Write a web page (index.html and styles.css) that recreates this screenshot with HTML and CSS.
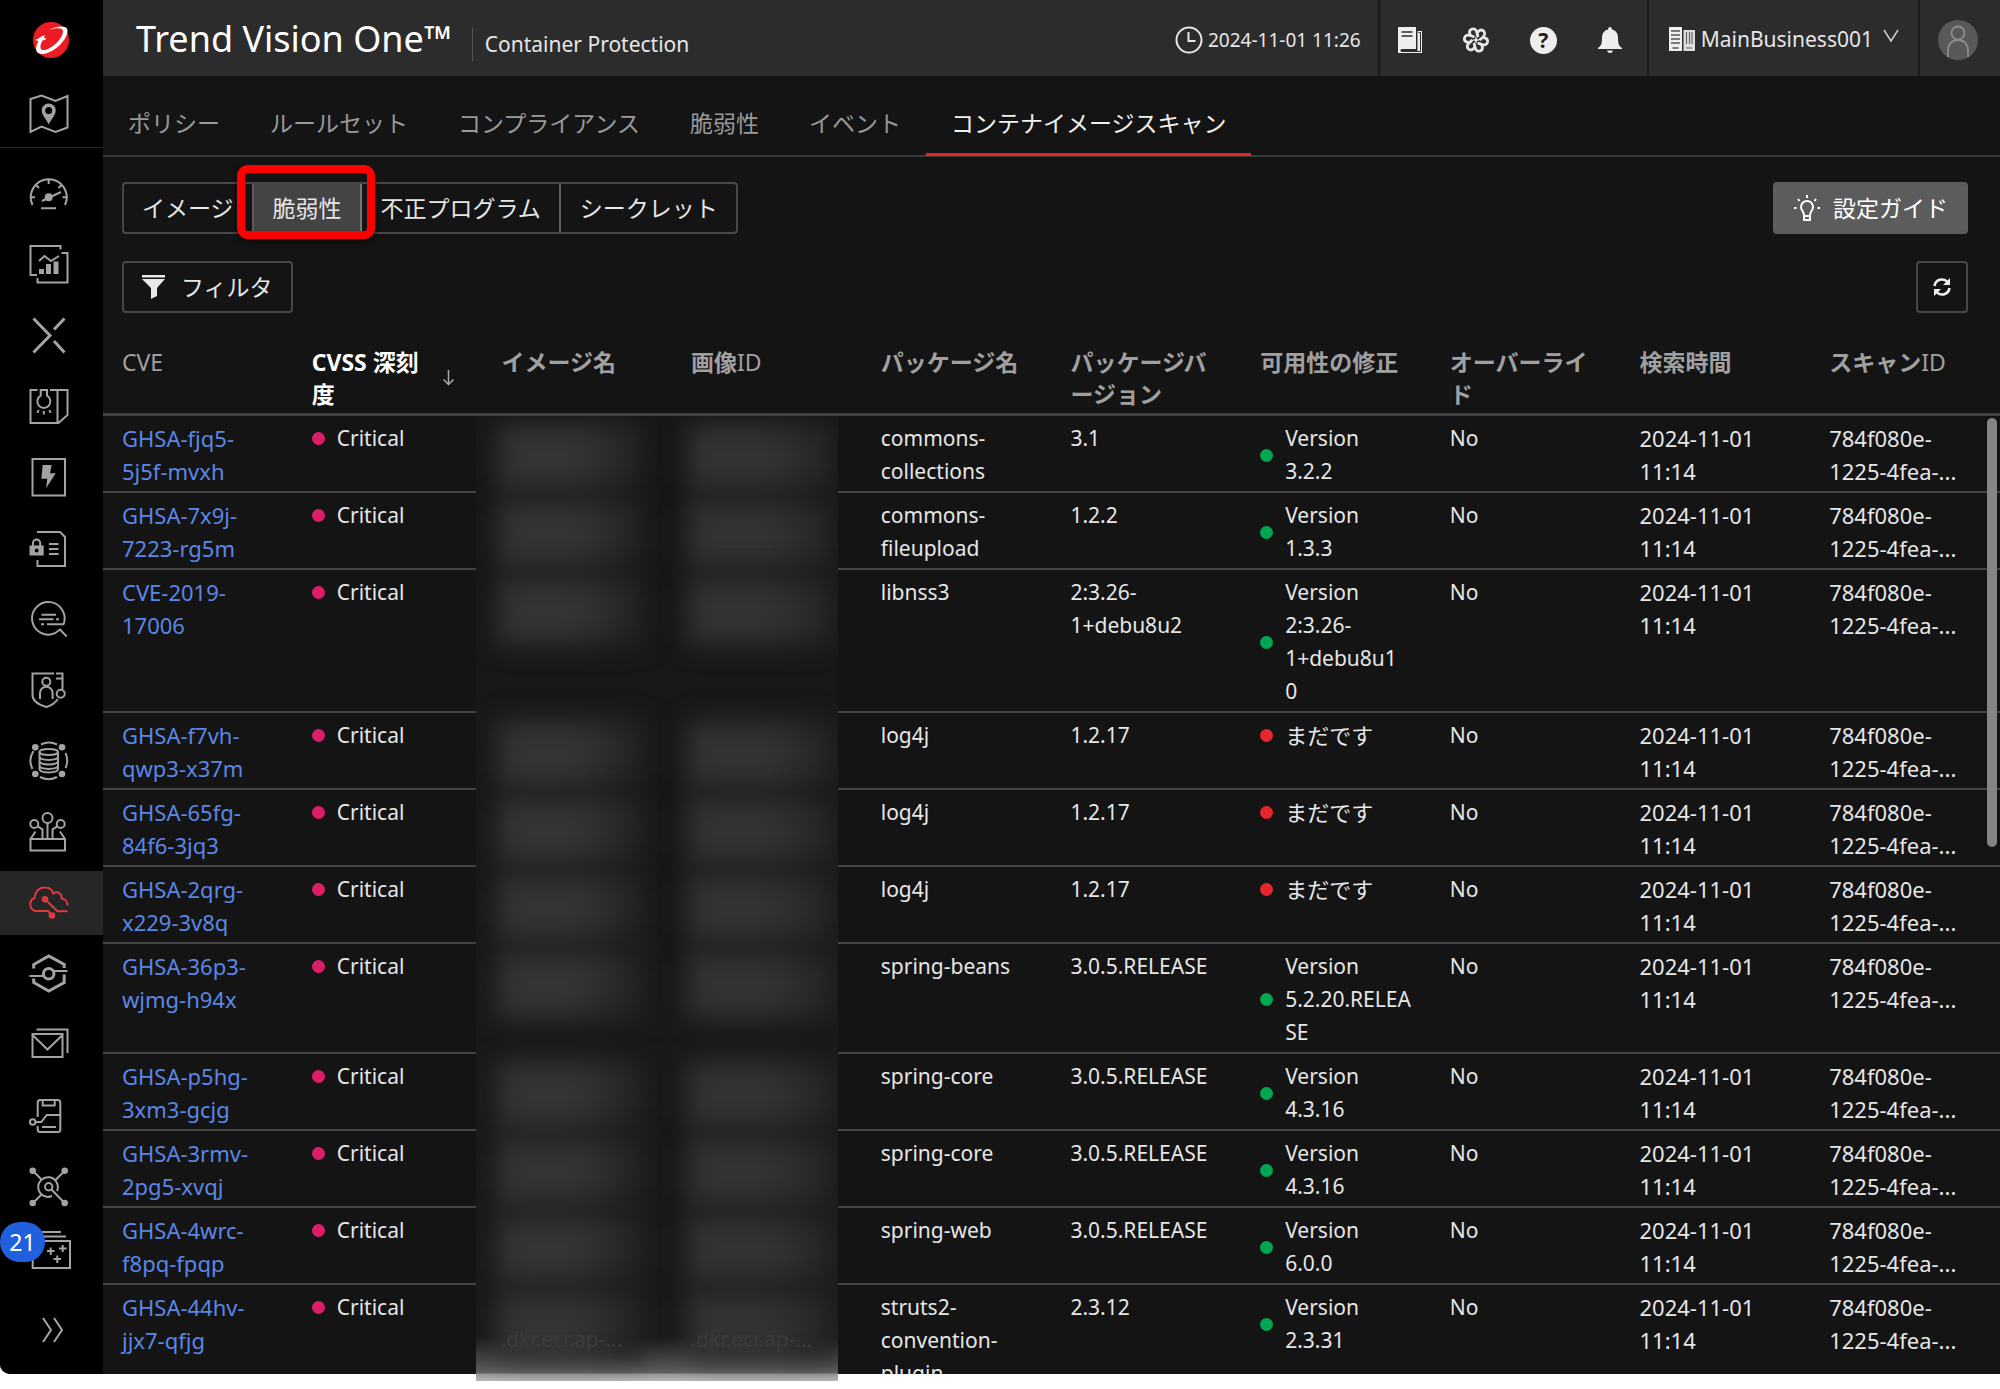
FILE: index.html
```html
<!DOCTYPE html>
<html lang="ja">
<head>
<meta charset="utf-8">
<title>Trend Vision One - Container Protection</title>
<link rel="stylesheet" href="styles.css">
</head>
<body>
<div class="app">
  <aside class="sidebar">
    <a class="logo" href="#" aria-label="Home"><svg width="36" height="36" viewBox="0 0 36 36"><circle cx="18" cy="18" r="18" fill="#ed1c24"/><path d="M2 18c2-1 5-2 7-4l3-.5-1.500 3 3-.5-1 1.500-3 1C6 25 7 29 12 28c8-2 17-11 18-18 .5-4-5-5-14-2C24 3.500 34 3 34.500 8c.5 9-12 22-24 24C3 33 1 27 5.500 19z" fill="#fff"/></svg></a>
    <a class="nav-item nav-map" href="#" aria-label="Map"><svg class="ico" viewBox="0 0 38 38"><path d="M.5 4l11-3.500 14 5.500 12-5v31.500l-12 4.500-14-5.500-11 5.500z"/><path class="f" fill-rule="evenodd" d="M18.700 8.500a7 7 0 0 0-7 7c0 5 5 9 7 14 2-5 7-9 7-14a7 7 0 0 0-7-7zm0 3.500a3.500 3.500 0 1 1 0 7 3.500 3.500 0 0 1 0-7z"/></svg></a>
    <nav class="nav" aria-label="Main">
      <a class="nav-item" href="#" aria-label="Dashboard"><svg class="ico" viewBox="0 0 38 38"><path d="M2.500 31A18 18 0 1 1 35 31M18.700 5v5M1 23.300h4M32.500 23.300h4M6 11l3 3M31.500 11l-3 3M12 27l19-9M11 34.300h15"/><circle class="f" cx="18.700" cy="23.300" r="4"/></svg></a>
      <a class="nav-item" href="#" aria-label="Reports"><svg class="ico" viewBox="0 0 38 38"><path d="M30.500 4.500V1H.5v29H7M31.500 8h6v29.500h-30V33M9 16l5.500-5 6.500 5 8-5"/><path class="f" d="M9 24h5v5H9zM16 19h5v10h-5zM23.500 16.500h5V29h-5z"/></svg></a>
      <a class="nav-item" href="#" aria-label="XDR"><svg class="ico" viewBox="0 0 38 38"><path stroke-width="3" d="M3.500 2.500l16.500 17-16.500 17M34.500 2.500L24 13.500M24 25l10.500 11.500"/></svg></a>
      <a class="nav-item" href="#" aria-label="Threat intelligence"><svg class="ico" viewBox="0 0 38 38"><path d="M7.500 3H.5v33h28l9-8V3H20M27.500 3v33M10.700 3v5.700a6.500 6.500 0 1 0 6.300 0V3zM13.800 24v3.500M8.500 23l-1 3M19.500 23l1 3"/></svg></a>
      <a class="nav-item" href="#" aria-label="Response"><svg class="ico" viewBox="0 0 38 38"><path d="M2.500 1h32.500v36.500H2.500z"/><path class="f" d="M12.700 7h9l-1.700 8.300h5.700L16 30.300l1.300-9.600h-6z"/></svg></a>
      <a class="nav-item" href="#" aria-label="Zero trust"><svg class="ico" viewBox="0 0 38 38"><path d="M7 3h23l5 5v29H7.500v-6M19 15h9.500M19 20h9.500M19 25h9.500M3 17v-3a3.600 3.600 0 0 1 7.200 0v3"/><path class="f" fill-rule="evenodd" d="M-.5 16.500h14.200v10H-.5zM6.600 19.500a2 2 0 1 0 0 4 2 2 0 0 0 0-4z"/></svg></a>
      <a class="nav-item" href="#" aria-label="Search"><svg class="ico" viewBox="0 0 38 38"><path d="M33.500 24.300A16.300 16.300 0 1 0 25 33.200l5-3.700 6.700 7M11.500 14.700H26M9 19.300h14.500M26 19.300h3M11 24.300h3M17 24.300h17"/></svg></a>
      <a class="nav-item" href="#" aria-label="Identity"><svg class="ico" viewBox="0 0 38 38"><path d="M24 2.500H2.500V24c0 6 7 10 13.800 12 5-1.500 9-4 11.500-8M26 2.500h6.500V18M26 7.500h6M10 28v-6a6.300 6.300 0 0 1 12.600 0v6"/><circle cx="16.300" cy="10.700" r="4"/><circle cx="30.700" cy="22.700" r="4"/></svg></a>
      <a class="nav-item" href="#" aria-label="Data security"><svg class="ico" viewBox="0 0 38 38"><path d="M11 2.500a18 18 0 0 1 16 0M35.500 11a18 18 0 0 1 0 15M27 35a18 18 0 0 1-17 0M2.500 27a18 18 0 0 1 1-18M9.500 10v17c0 4.500 18.500 4.500 18.500 0V10M9.500 14.500c0 4.500 18.500 4.500 18.500 0M9.500 19c0 4.500 18.500 4.500 18.500 0M9.500 23.500c0 4.500 18.500 4.500 18.500 0"/><ellipse cx="18.700" cy="10" rx="9.300" ry="3"/><g class="f"><circle cx="5.300" cy="5.300" r="3.300"/><circle cx="32" cy="5.300" r="3.300"/><circle cx="5.300" cy="32" r="3.300"/><circle cx="32" cy="32" r="3.300"/></g></svg></a>
      <a class="nav-item" href="#" aria-label="Assets"><svg class="ico" viewBox="0 0 38 38"><path d="M17.500 10v16M8 13.700l4.500 2.600V26M27 13.700l-4.500 2.600V26M.5 26H35v11.500H.5zl5-7.500M35 26l-5-7.500"/><circle cx="17.500" cy="5" r="5"/><circle cx="4.300" cy="11" r="4"/><circle cx="30.700" cy="11" r="4"/></svg></a>
      <a class="nav-item active" href="#" aria-label="Cloud security"><svg class="ico" viewBox="0 0 38 38"><path d="M4.500 27h13.500l4 4.700M18 27H5C-1 25-1.500 16 4.700 14 5 6 11 3 15.700 3.500c4 .3 6.500 2.500 7.500 6 4-3 9 0 8.500 5 3.500.5 5.800 3.500 5.800 7M15 15.300l12.500 12h10"/><g class="f"><circle cx="15" cy="15.300" r="3.300"/><circle cx="22" cy="31.500" r="3.300"/></g></svg></a>
      <a class="nav-item" href="#" aria-label="Network security"><svg class="ico" viewBox="0 0 38 38"><g stroke-width="3"><path d="M3.700 13.500V9.500l15-8.500 15.500 8.500V13M3.700 23.500v4l15 8.500 15.500-8.500v-8"/><circle cx="18.700" cy="18.700" r="5.300"/></g><path d="M-.5 21H13M24 16h13.500"/></svg></a>
      <a class="nav-item" href="#" aria-label="Email security"><svg class="ico" viewBox="0 0 38 38"><path d="M2.500 8h30v23h-30zM2.500 9l15 14.500L32.500 9M6.500 3.500h31v23.500"/></svg></a>
      <a class="nav-item" href="#" aria-label="Mobile security"><svg class="ico" viewBox="0 0 38 38"><path d="M7.700 20V5.500c0-1.500 1-2.500 2.500-2.500h17.500c1.500 0 2.600 1 2.600 2.500v27c0 1.500-1 2.500-2.600 2.500H10.200c-1.500 0-2.500-1-2.500-2.500V29M12.700 3v5.500h12V3M5.700 25h5.600l5.400-7h13.600M12 30h14"/><circle cx="2.700" cy="25" r="2.800"/></svg></a>
      <a class="nav-item" href="#" aria-label="Service management"><svg class="ico" viewBox="0 0 38 38"><path d="M3 3l9 9M34.500 3l-9 9M3 35l9-9M21 21l13.500 14M27 23a9.800 9.800 0 1 0-5 5"/><circle cx="18.700" cy="18.700" r="3.700"/><g class="f"><circle cx="2.700" cy="2.700" r="3.300"/><circle cx="34.700" cy="2.700" r="3.300"/><circle cx="2.700" cy="35" r="3.300"/><circle cx="34.700" cy="35" r="3.300"/></g></svg></a>
      <a class="nav-item" href="#" aria-label="What's new"><svg class="ico" viewBox="0 8 38 38"><path d="M2.700 10H40v27H2.700zM10 5.500h26M12 1h19M17 20h7.500M20.700 16.500V24M29 17.500h7.500M32.700 14v7M23.500 28H31M27.300 24.500V32"/></svg><span class="badge">21</span></a>
    </nav>
    <button class="expand" aria-label="Expand"><svg width="22" height="26" viewBox="0 0 22 26" fill="none" stroke="#a6a6a6" stroke-width="2"><path d="M1 1l8 12-8 12M12 1l8 12-8 12"/></svg></button>
  </aside>

  <div class="main">
    <header class="header">
      <h1 class="title">Trend Vision One™</h1>
      <span class="subtitle">Container Protection</span>
      <div class="clock"><svg width="28" height="28" viewBox="0 0 28 28" fill="none" stroke="#e6e6e6" stroke-width="2"><circle cx="14" cy="14" r="12.500"/><path d="M13.500 6v9h7"/></svg><time>2024-11-01 11:26</time></div>
      <div class="tools">
        <button class="icon-btn" aria-label="Documents"><svg width="24" height="26" viewBox="0 0 24 26"><path d="M0 0h18v22H3.500L2 24h17.500V4H24v22H0z" fill="#eee"/><path d="M20.500 5.500h2v19H3" fill="none" stroke="#2c2c2c"/><path d="M3.500 5h11M3.500 9h11" stroke="#2c2c2c" stroke-width="1.500"/></svg></button>
        <button class="icon-btn" aria-label="Companion"><svg width="26" height="26" viewBox="0 0 26 26" fill="none" stroke="#e6e6e6" stroke-width="2.800"><g id="petal"><path d="M11.500 9.500C6 10 5 3.500 9 2c3-.8 5 1.500 4.500 4"/></g><use href="#petal" transform="rotate(60 13 13)"/><use href="#petal" transform="rotate(120 13 13)"/><use href="#petal" transform="rotate(180 13 13)"/><use href="#petal" transform="rotate(240 13 13)"/><use href="#petal" transform="rotate(300 13 13)"/><path d="M13 9l1 3 3 1-3 1-1 3-1-3-3-1 3-1z" fill="#e6e6e6" stroke="none"/></svg></button>
        <button class="icon-btn help" aria-label="Help">?</button>
        <button class="icon-btn" aria-label="Notifications"><svg width="24" height="26" viewBox="0 0 24 26" fill="#eee"><path d="M12 0c1 0 2 1 2 2.500 4 1 6 4 6 8.500 0 6 1 8 4 10v1H0v-1c3-2 4-4 4-10 0-4.500 2-7.500 6-8.500C10 1 11 0 12 0zM9 23.500h6c-.5 1.700-1.500 2.500-3 2.500s-2.500-.8-3-2.500z"/></svg></button>
      </div>
      <button class="account"><svg width="26" height="24" viewBox="0 0 26 24"><path d="M0 0h13v24H0z" fill="#eee"/><path d="M2 4h9M2 8h9M2 12h9M2 16h9M3.500 21h6" stroke="#555" stroke-width="1.500"/><path d="M14.500 3H26v21H14.500z" fill="#ddd"/><path d="M17.500 5v12M20.500 5v12M23 5v12M17 21h6" stroke="#666" stroke-width="1.200"/></svg>MainBusiness001<svg class="chev" width="16" height="14" viewBox="0 0 16 14" fill="none" stroke="#ccc" stroke-width="1.500"><path d="M1 1l7 11 7-11"/></svg></button>
      <button class="user" aria-label="User"><svg width="40" height="40" viewBox="0 0 40 40"><circle cx="20" cy="20" r="20" fill="#595959"/><g fill="none" stroke="#8c8c8c" stroke-width="1.800"><circle cx="20" cy="13" r="6.500"/><path d="M10 37v-6c0-7 4-11 10-11s10 4 10 11v6"/></g></svg></button>
    </header>

    <nav class="tabs">
      <a href="#">ポリシー</a><a href="#">ルールセット</a><a href="#">コンプライアンス</a><a href="#">脆弱性</a><a href="#">イベント</a><a href="#" class="current">コンテナイメージスキャン</a>
    </nav>

    <div class="toolbar">
      <div class="bar">
        <div class="segments">
          <button>イメージ</button><button class="selected">脆弱性<span class="marker"></span></button><button>不正プログラム</button><button>シークレット</button>
        </div>
        <button class="btn guide"><svg width="28" height="28" viewBox="0 0 28 28" fill="none" stroke="#fff" stroke-width="2"><path d="M11 21c0-3-3-4.500-3-8a6 6 0 0 1 12 0c0 3.500-3 5-3 8v5h-6zM11 22h6M14 1v3M5 5l1.500 2M23 5l-1.500 2M1 14h2.500M24.500 14H27"/></svg>設定ガイド</button>
      </div>
      <div class="bar">
        <button class="btn"><svg width="23" height="24" viewBox="0 0 23 24" fill="#e8e8e8"><path d="M0 0h23v2.500H0zM0 4h23l-8 9v8l-6 3V13z"/></svg>フィルタ</button>
        <button class="btn refresh" aria-label="Refresh"><svg width="20" height="20" viewBox="0 0 20 20" fill="none" stroke="#f0f0f0" stroke-width="2.600"><path d="M2.500 9a7.500 7.500 0 0 1 13-4M17.500 11a7.500 7.500 0 0 1-13 4"/><path d="M18 1v7h-7zM2 19v-7h7z" fill="#f0f0f0" stroke="none"/></svg></button>
      </div>
    </div>

    <section class="grid-area">
      <div class="scroller">
        <table>
          <thead><tr>
            <th><span>CVE</span></th>
            <th class="sorted"><div class="sort">CVSS 深刻<br>度<svg width="13" height="16" viewBox="0 0 13 16" fill="none" stroke="#aaa" stroke-width="1.500"><path d="M6.500 0v14M1.500 9.500l5 5 5-5"/></svg></div></th>
            <th>イメージ名</th><th>画像<span>ID</span></th><th>パッケージ名</th><th>パッケージバ<br>ージョン</th><th>可用性の修正</th><th>オーバーライ<br>ド</th><th>検索時間</th><th>スキャン<span>ID</span></th>
          </tr></thead>
          <tbody>
            <tr><td class="wide"><a href="#">GHSA-fjq5-<br>5j5f-mvxh</a></td><td><div class="state critical">Critical</div></td><td></td><td></td><td>commons-<br>collections</td><td>3.1</td><td><div class="state ok">Version<br>3.2.2</div></td><td>No</td><td class="wide">2024-11-01<br>11:14</td><td class="wide">784f080e-<br>1225-4fea-...</td></tr>
            <tr><td class="wide"><a href="#">GHSA-7x9j-<br>7223-rg5m</a></td><td><div class="state critical">Critical</div></td><td></td><td></td><td>commons-<br>fileupload</td><td>1.2.2</td><td><div class="state ok">Version<br>1.3.3</div></td><td>No</td><td class="wide">2024-11-01<br>11:14</td><td class="wide">784f080e-<br>1225-4fea-...</td></tr>
            <tr><td class="wide"><a href="#">CVE-2019-<br>17006</a></td><td><div class="state critical">Critical</div></td><td></td><td></td><td>libnss3</td><td>2:3.26-<br>1+debu8u2</td><td><div class="state ok">Version<br>2:3.26-<br>1+debu8u1<br>0</div></td><td>No</td><td class="wide">2024-11-01<br>11:14</td><td class="wide">784f080e-<br>1225-4fea-...</td></tr>
            <tr><td class="wide"><a href="#">GHSA-f7vh-<br>qwp3-x37m</a></td><td><div class="state critical">Critical</div></td><td></td><td></td><td>log4j</td><td>1.2.17</td><td class="wide"><div class="state none">まだです</div></td><td>No</td><td class="wide">2024-11-01<br>11:14</td><td class="wide">784f080e-<br>1225-4fea-...</td></tr>
            <tr><td class="wide"><a href="#">GHSA-65fg-<br>84f6-3jq3</a></td><td><div class="state critical">Critical</div></td><td></td><td></td><td>log4j</td><td>1.2.17</td><td class="wide"><div class="state none">まだです</div></td><td>No</td><td class="wide">2024-11-01<br>11:14</td><td class="wide">784f080e-<br>1225-4fea-...</td></tr>
            <tr><td class="wide"><a href="#">GHSA-2qrg-<br>x229-3v8q</a></td><td><div class="state critical">Critical</div></td><td></td><td></td><td>log4j</td><td>1.2.17</td><td class="wide"><div class="state none">まだです</div></td><td>No</td><td class="wide">2024-11-01<br>11:14</td><td class="wide">784f080e-<br>1225-4fea-...</td></tr>
            <tr><td class="wide"><a href="#">GHSA-36p3-<br>wjmg-h94x</a></td><td><div class="state critical">Critical</div></td><td></td><td></td><td>spring-beans</td><td>3.0.5.RELEASE</td><td><div class="state ok">Version<br>5.2.20.RELEA<br>SE</div></td><td>No</td><td class="wide">2024-11-01<br>11:14</td><td class="wide">784f080e-<br>1225-4fea-...</td></tr>
            <tr><td class="wide"><a href="#">GHSA-p5hg-<br>3xm3-gcjg</a></td><td><div class="state critical">Critical</div></td><td></td><td></td><td>spring-core</td><td>3.0.5.RELEASE</td><td><div class="state ok">Version<br>4.3.16</div></td><td>No</td><td class="wide">2024-11-01<br>11:14</td><td class="wide">784f080e-<br>1225-4fea-...</td></tr>
            <tr><td class="wide"><a href="#">GHSA-3rmv-<br>2pg5-xvqj</a></td><td><div class="state critical">Critical</div></td><td></td><td></td><td>spring-core</td><td>3.0.5.RELEASE</td><td><div class="state ok">Version<br>4.3.16</div></td><td>No</td><td class="wide">2024-11-01<br>11:14</td><td class="wide">784f080e-<br>1225-4fea-...</td></tr>
            <tr><td class="wide"><a href="#">GHSA-4wrc-<br>f8pq-fpqp</a></td><td><div class="state critical">Critical</div></td><td></td><td></td><td>spring-web</td><td>3.0.5.RELEASE</td><td><div class="state ok">Version<br>6.0.0</div></td><td>No</td><td class="wide">2024-11-01<br>11:14</td><td class="wide">784f080e-<br>1225-4fea-...</td></tr>
            <tr><td class="wide"><a href="#">GHSA-44hv-<br>jjx7-qfjg</a></td><td><div class="state critical">Critical</div></td><td></td><td></td><td>struts2-<br>convention-<br>plugin</td><td>2.3.12</td><td><div class="state ok">Version<br>2.3.31</div></td><td>No</td><td class="wide">2024-11-01<br>11:14</td><td class="wide">784f080e-<br>1225-4fea-...</td></tr>
          </tbody>
        </table>
      </div>
      <div class="redaction">
        <div class="smear"></div><div class="smear"></div><div class="smear four"></div><div class="smear"></div><div class="smear"></div><div class="smear"></div><div class="smear three"></div><div class="smear"></div><div class="smear"></div><div class="smear"></div><div class="smear last"><span>.dkr.ecr.ap-...</span><span>.dkr.ecr.ap-...</span></div>
      </div>
      <div class="thumb"></div>
    </section>
  </div>
</div>
</body>
</html>
```
FILE: styles.css
```css
* { box-sizing: border-box; }
body {
  min-height: 100vh;
  margin: 0;
  background: #fff;
  color: #e6e6e6;
  font: 21px/33px "Noto Sans", "Noto Sans CJK JP", sans-serif;
}
a { color: inherit; text-decoration: none; }
button {
  margin: 0;
  padding: 0;
  border: 0;
  background: none;
  color: inherit;
  font: inherit;
  white-space: nowrap;
}
svg { display: block; flex: none; overflow: visible; }

.app {
  display: flex;
  height: calc(100vh - 15px);
  background: #141414;
  border-radius: 0 0 0 10px;
}

/* Sidebar */
.sidebar {
  display: flex;
  flex-direction: column;
  flex: none;
  width: 103px;
  background: #000;
  border-radius: 0 0 0 10px;
}
.logo {
  display: flex;
  align-items: center;
  height: 80px;
  padding-left: 33px;
}
.nav-item {
  position: relative;
  display: flex;
  align-items: center;
  height: 64px;
  padding-left: 30px;
  color: #a3a3a3;
}
.nav-map { height: 68px; border-bottom: 1px solid #262626; }
.ico {
  width: 38px;
  height: 38px;
  fill: none;
  stroke: currentColor;
  stroke-width: 2;
}
.ico .f { fill: currentColor; stroke: none; }
.nav {
  display: flex;
  flex: 1;
  flex-direction: column;
  justify-content: space-between;
  padding-top: 13px;
}
.nav-item.active { background: #262626; color: #dd3b41; }
.badge {
  position: absolute;
  left: 0;
  top: -4px;
  width: 45px;
  height: 40px;
  border-radius: 22px;
  background: #2160dc;
  color: #fff;
  font-size: 23px;
  line-height: 40px;
  text-align: center;
}
.expand {
  display: flex;
  align-items: center;
  height: 84px;
  padding: 0 0 4px 42px;
}

/* Header */
.main { display: flex; flex: 1; flex-direction: column; min-width: 0; }
.header {
  display: flex;
  align-items: center;
  flex: none;
  height: 76px;
  padding-left: 33px;
  background: #2c2c2c;
}
.title {
  margin: 0;
  padding-top: 2px;
  color: #fff;
  font-size: 36px;
  font-weight: 400;
  line-height: 48px;
}
.subtitle {
  margin: 12px 0 0 20px;
  padding-left: 12px;
  border-left: 1px solid #555;
}
.clock {
  display: flex;
  align-items: center;
  gap: 5px;
  height: 76px;
  margin-left: auto;
  padding: 4px 17px 0 0;
  border-right: 2px solid #191919;
  font-size: 19px;
}
.tools {
  display: flex;
  align-items: center;
  justify-content: space-between;
  width: 269px;
  height: 76px;
  padding: 4px 25px 0 18px;
  border-right: 2px solid #191919;
}
.help {
  width: 27px;
  height: 27px;
  border-radius: 50%;
  background: #eee;
  color: #222;
  font-size: 21px;
  font-weight: 700;
  line-height: 27px;
}
.account {
  display: flex;
  align-items: center;
  gap: 6px;
  height: 76px;
  padding: 2px 19px 0 20px;
  border-right: 2px solid #191919;
}
.chev { margin: 0 0 6px 4px; }
.user { padding: 4px 22px 0 18px; }

/* Tabs */
.tabs {
  display: flex;
  flex: none;
  height: 81px;
  border-bottom: 2px solid #3a3a3a;
  color: #999;
  font-size: 23px;
  line-height: 94px;
}
.tabs a { height: 80px; padding: 0 25px; white-space: nowrap; }
.tabs .current { border-bottom: 3px solid #e5262d; color: #f0f0f0; }

/* Toolbar */
.toolbar {
  display: flex;
  flex: none;
  flex-direction: column;
  gap: 27px;
  padding: 25px 32px 24px 19px;
  font-size: 23px;
}
.bar { display: flex; justify-content: space-between; }
.segments {
  display: flex;
  height: 52px;
  border: 2px solid #484848;
  border-radius: 4px;
}
.segments button { position: relative; padding: 0 18px; }
.segments button + button { padding-left: 19px; border-left: 2px solid #5c5c5c; }
.segments .selected { background: #444; }
.segments .selected + button { border-left-color: #777; }
.marker {
  position: absolute;
  z-index: 1;
  inset: -19px -15px -7px -17px;
  border: 8px solid #f00;
  border-radius: 11px;
  box-shadow: 0 3px 6px #0009;
}
.btn {
  display: flex;
  align-items: center;
  gap: 16px;
  height: 52px;
  padding: 0 18px;
  border: 2px solid #484848;
  border-radius: 4px;
}
.guide { gap: 12px; border-color: #5c5c5c; background: #5c5c5c; color: #fff; }
.refresh { padding: 0 14px; }

/* Data grid */
.grid-area { position: relative; flex: 1; min-height: 0; }
.scroller { height: 100%; overflow: hidden; }
table { width: 100%; table-layout: fixed; border-spacing: 0; }
th, td { text-align: left; vertical-align: top; white-space: nowrap; }
th {
  padding: 9px 0 3px 19px;
  border-bottom: 3px solid #404040;
  color: #a0a0a0;
  font-size: 23px;
  font-weight: 700;
  line-height: 32px;
}
th span { font-weight: 400; }
.sorted { color: #fff; }
.sort { display: flex; align-items: center; justify-content: space-between; padding-right: 27px; }
td { padding: 6px 0 3px 19px; border-bottom: 2px solid #444; }
.wide { font-size: 22px; }
td a { color: #5a87e6; }
.state { display: flex; align-items: center; gap: 12px; }
.state::before {
  content: "";
  flex: none;
  width: 13px;
  height: 13px;
  border-radius: 50%;
  background: #00a650;
}
.critical::before { background: #dc1e69; }
.none::before { background: #e5262d; }

/* Blurred-out image columns */
.redaction {
  position: absolute;
  top: 79px;
  bottom: -7px;
  left: calc(20% - 6px);
  width: calc(20% - 18px);
  overflow: hidden;
  background: linear-gradient(to top, #b8b8b8, #999 7px, #626262 8px, #484848 20px, #1a1a1a 44px, #171717);
}
.smear { position: relative; height: 77px; }
.four { height: 143px; }
.three { height: 110px; }
.smear::before, .smear::after {
  content: "";
  position: absolute;
  top: 8px;
  left: 22px;
  width: 146px;
  height: 66px;
  background: linear-gradient(100deg, #343434 55%, #202020);
  filter: blur(13px);
}
.smear::after { left: 212px; background: linear-gradient(90deg, #333 55%, #242424); }
.last { display: flex; padding: 38px 0 0 24px; color: #3b3b3b; }
.last span { position: relative; z-index: 1; width: 190px; flex: none; }

.thumb {
  position: absolute;
  top: 81px;
  right: 3px;
  width: 10px;
  height: 429px;
  border-radius: 5px;
  background: #858585;
}
```
